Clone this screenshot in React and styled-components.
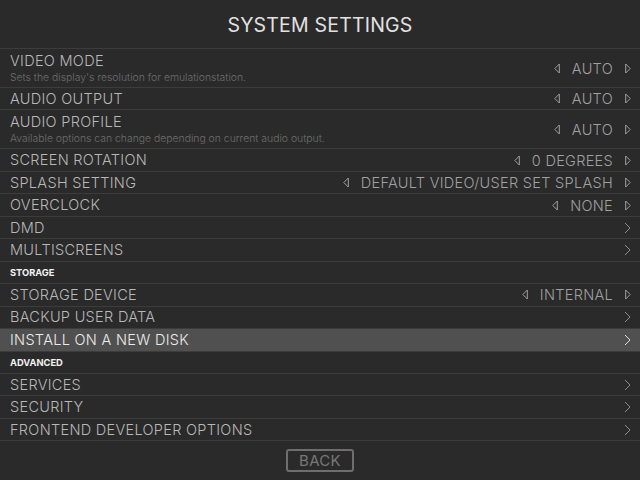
import styled, { createGlobalStyle } from 'styled-components';

const GlobalStyle = createGlobalStyle`
  html, body {
    margin: 0;
    padding: 0;
    background: #2a2a2a;
  }
  body {
    font-family: Inter, "Open Sans", sans-serif;
  }
`;

const rows = [
  { label: 'VIDEO MODE', desc: "Sets the display's resolution for emulationstation.", value: 'AUTO' },
  { label: 'AUDIO OUTPUT', value: 'AUTO' },
  { label: 'AUDIO PROFILE', desc: 'Available options can change depending on current audio output.', value: 'AUTO' },
  { label: 'SCREEN ROTATION', value: '0 DEGREES' },
  { label: 'SPLASH SETTING', value: 'DEFAULT VIDEO/USER SET SPLASH' },
  { label: 'OVERCLOCK', value: 'NONE' },
  { label: 'DMD' },
  { label: 'MULTISCREENS' },
  { section: 'STORAGE' },
  { label: 'STORAGE DEVICE', value: 'INTERNAL' },
  { label: 'BACKUP USER DATA' },
  { label: 'INSTALL ON A NEW DISK', selected: true },
  { section: 'ADVANCED' },
  { label: 'SERVICES' },
  { label: 'SECURITY' },
  { label: 'FRONTEND DEVELOPER OPTIONS' },
];

const LeftArrow = () => (
  <svg width="6" height="11" viewBox="0 0 6 11">
    <polygon points="5.3,1 0.8,5.5 5.3,10" fill="none" stroke="currentColor" strokeWidth="1" />
  </svg>
);

const RightArrow = () => (
  <svg width="6" height="11" viewBox="0 0 6 11">
    <polygon points="0.7,1 5.2,5.5 0.7,10" fill="none" stroke="currentColor" strokeWidth="1" />
  </svg>
);

const Chevron = () => (
  <svg width="7" height="12" viewBox="0 0 7 12">
    <polyline points="1,1 6,6 1,11" fill="none" stroke="currentColor" strokeWidth="1" />
  </svg>
);

const App = () => {
  return (
    <Screen>
      <GlobalStyle />
      <Header>SYSTEM SETTINGS</Header>
      <List>
        {rows.map((r, i) =>
          r.section ? (
            <SectionRow key={i}>{r.section}</SectionRow>
          ) : (
            <Row key={i} $tall={!!r.desc} $selected={r.selected}>
              <LabelBlock>
                <Label $selected={r.selected}>{r.label}</Label>
                {r.desc && <Desc>{r.desc}</Desc>}
              </LabelBlock>
              {r.value ? (
                <Picker>
                  <LeftArrow />
                  <Value>{r.value}</Value>
                  <RightArrow />
                </Picker>
              ) : (
                <More $selected={r.selected}>
                  <Chevron />
                </More>
              )}
            </Row>
          )
        )}
      </List>
      <Footer>
        <BackButton>BACK</BackButton>
      </Footer>
    </Screen>
  );
};

const Screen = styled.div`
  width: 640px;
  height: 480px;
  background: #2a2a2a;
  display: flex;
  flex-direction: column;
  overflow: hidden;
`;

const Header = styled.div`
  height: 47px;
  display: flex;
  align-items: center;
  justify-content: center;
  color: #e2e2e2;
  font-size: 19.5px;
  font-weight: 400;
  letter-spacing: 0.2px;
  padding-top: 1px;
`;

const List = styled.div`
  display: flex;
  flex-direction: column;
  border-bottom: 1px solid #3c3c3c;
`;

const Row = styled.div`
  box-sizing: border-box;
  height: ${(p) => (p.$tall ? '39px' : '22.46px')};
  display: flex;
  align-items: center;
  justify-content: space-between;
  padding: 0 9px 0 10px;
  border-top: 1px solid #3c3c3c;
  background: ${(p) => (p.$selected ? '#505050' : 'transparent')};
`;

const SectionRow = styled.div`
  box-sizing: border-box;
  height: 22.46px;
  display: flex;
  align-items: center;
  padding: 0 10px;
  border-top: 1px solid #3c3c3c;
  color: #f2f2f2;
  font-size: 9.3px;
  font-weight: 700;
`;

const LabelBlock = styled.div`
  display: flex;
  flex-direction: column;
`;

const Label = styled.div`
  color: ${(p) => (p.$selected ? '#ececec' : '#b8b8b8')};
  font-size: 14.5px;
  font-weight: 300;
  letter-spacing: 0.3px;
  line-height: 18px;
`;

const Desc = styled.div`
  color: #6e6e6e;
  font-size: 10.4px;
  font-weight: 300;
  line-height: 15px;
`;

const Picker = styled.div`
  display: flex;
  align-items: center;
  gap: 12px;
  color: #a0a0a0;
`;

const Value = styled.span`
  font-size: 14.5px;
  font-weight: 300;
  letter-spacing: 0.3px;
`;

const More = styled.div`
  display: flex;
  align-items: center;
  color: ${(p) => (p.$selected ? '#e0e0e0' : '#8c8c8c')};
`;

const Footer = styled.div`
  flex: 1;
  display: flex;
  justify-content: center;
  align-items: center;
`;

const BackButton = styled.div`
  box-sizing: border-box;
  width: 68px;
  height: 23px;
  border: 2px solid #6e6e6e;
  border-radius: 3px;
  display: flex;
  align-items: center;
  justify-content: center;
  color: #777;
  font-size: 15px;
  font-weight: 400;
  letter-spacing: 0.3px;
`;

export default App;
